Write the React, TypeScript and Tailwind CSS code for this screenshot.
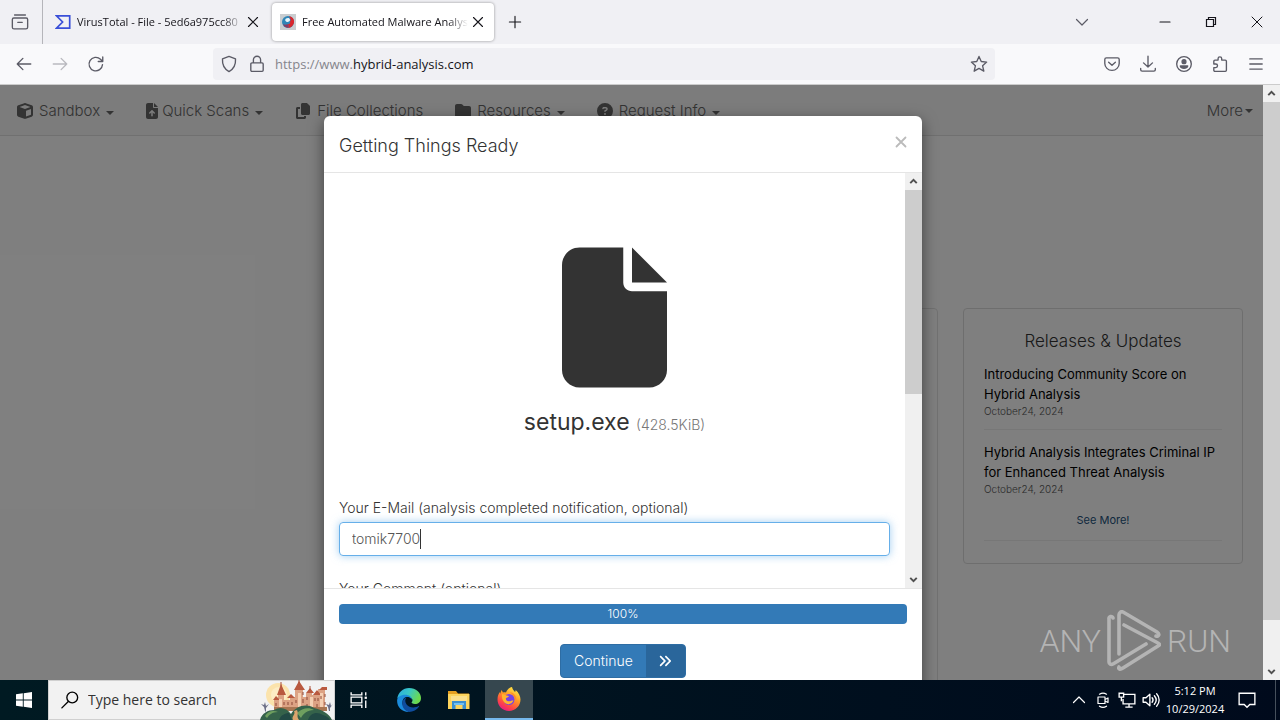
import type { ReactNode } from "react";
import {
  FaAnglesRight,
  FaCircleQuestion,
  FaCopy,
  FaCube,
  FaFile,
  FaFileArrowUp,
  FaFolder,
} from "react-icons/fa6";

function Glyph({ children, className = "size-4" }: { children: ReactNode; className?: string }) {
  return (
    <svg
      viewBox="0 0 16 16"
      className={className}
      fill="none"
      stroke="currentColor"
      strokeWidth="1.2"
      strokeLinecap="round"
      strokeLinejoin="round"
      aria-hidden="true"
    >
      {children}
    </svg>
  );
}

function VirusTotalIcon() {
  return (
    <svg viewBox="0 0 16 16" className="size-4 shrink-0" fill="none" stroke="#3a4fd8" strokeWidth="1.7">
      <path d="M1.5 1.8h13.2v12.4H1.5L7.6 8z" />
    </svg>
  );
}

function HybridIcon() {
  return (
    <svg viewBox="0 0 16 16" className="size-4 shrink-0">
      <path fill="#c9cdd0" d="M0 0h16v16H0z" />
      <circle cx="8" cy="8" r="6" fill="#2f86b8" />
      <path fill="#d9262c" d="M9 2.200c4 .6 5.500 3.500 5 6.300-.5 3-3 5.300-6 5.300 1-1.500.5-2.500-.5-3.500 2 .2 3.200-1 2.500-2.800 1-.8 1-3-1-5.300z" />
      <path fill="#e8f4fa" d="M6 4.500c2-1.200 3.800-.5 4 1.200.1 1.600-2 2.800-3.600 2C5 7 4.800 5.300 6 4.500z" />
      <path fill="#8b3a62" d="M3 10c1.500 1 3 .8 4.500.3.900 1 1.500 2 .5 3.500-2.400 0-4.200-1.600-5-3.800z" />
    </svg>
  );
}

function Tab({ icon, title, active }: { icon: ReactNode; title: string; active?: boolean }) {
  return (
    <div
      className={
        active
          ? "flex h-[38px] w-[222px] items-center rounded bg-white px-2 shadow-[0_0_3px_rgba(0,0,0,0.4)]"
          : "flex h-[38px] w-[222px] items-center px-2"
      }
    >
      {icon}
      <span className="ml-1.5 w-[166px] overflow-hidden pt-px text-[11px] whitespace-nowrap [mask-image:linear-gradient(to_right,black_88%,transparent)]">
        {title}
      </span>
      <button aria-label="Close tab" className="ml-1 shrink-0">
        <Glyph className="size-3">
          <path d="M2 2l12 12M14 2L2 14" strokeWidth="1.5" />
        </Glyph>
      </button>
    </div>
  );
}

function TabStrip() {
  return (
    <div className="flex h-11 shrink-0 items-center bg-[#f0f0f4] text-[#15141a]">
      <button aria-label="View recent browsing" className="flex h-full w-[43px] items-center justify-center border-r border-[#b5b5ba] pr-0.5 text-[#5b5b66]">
        <Glyph className="size-[18px]">
          <path d="M3.200 1.800h9.600M2.500 4.400h11c.8 0 1.300.5 1.300 1.300v6.900c0 .9-.6 1.500-1.500 1.500H2.700c-.9 0-1.500-.6-1.500-1.500V5.700c0-.8.500-1.300 1.300-1.300zM6 8.300h4" />
        </Glyph>
      </button>
      <div className="flex gap-[3px] pl-1">
        <Tab icon={<VirusTotalIcon />} title="VirusTotal - File - 5ed6a975cc80" />
        <Tab icon={<HybridIcon />} title="Free Automated Malware Analysis" active />
      </div>
      <button aria-label="New tab" className="ml-3">
        <Glyph className="size-[18px]">
          <path d="M8 3v10M3 8h10" strokeWidth="1" />
        </Glyph>
      </button>
      <button aria-label="List all tabs" className="mr-[52px] ml-auto text-[#5b5b66]">
        <Glyph>
          <path d="M2.500 5.500L8 11l5.500-5.500" />
        </Glyph>
      </button>
      <div className="flex">
        <button aria-label="Minimize" className="flex w-[46px] justify-center">
          <Glyph>
            <path d="M3 8h10" />
          </Glyph>
        </button>
        <button aria-label="Restore" className="flex w-[46px] justify-center">
          <Glyph>
            <path d="M3.500 5.500h7v7h-7zM5.500 5.500v-2h7v7h-2" strokeLinejoin="miter" />
          </Glyph>
        </button>
        <button aria-label="Close" className="flex w-[46px] justify-center">
          <Glyph>
            <path d="M3 3l10 10M13 3L3 13" strokeWidth="1" />
          </Glyph>
        </button>
      </div>
    </div>
  );
}

function ToolButton({ label, children }: { label: string; children: ReactNode }) {
  return (
    <button aria-label={label} className="flex w-9 justify-center">
      <Glyph className="size-[18px]">{children}</Glyph>
    </button>
  );
}

function Toolbar() {
  return (
    <div className="flex h-[41px] shrink-0 items-center border-b border-[#cccccc] bg-[#f9f9fb] px-1.5 text-[#5b5b66]">
      <ToolButton label="Back">
        <path d="M14 8H2M7 3L2 8l5 5" />
      </ToolButton>
      <span className="flex opacity-40">
        <ToolButton label="Forward">
          <path d="M2 8h12M9 3l5 5-5 5" />
        </ToolButton>
      </span>
      <ToolButton label="Reload">
        <path d="M13.800 8.500A6 6 0 1 1 12 3.800l1.800 1.700M14 1.800v4h-4" />
      </ToolButton>
      <div className="ml-[99px] flex h-8 flex-1 items-center rounded bg-[#f0f0f4] px-[7px]">
        <Glyph className="size-[18px]">
          <path d="M8 1.300l5.800 2.200c.3 4.700-1.300 8.700-5.800 11.200C3.500 12.200 1.900 8.200 2.200 3.500z" />
        </Glyph>
        <Glyph className="ml-2.5 size-[18px]">
          <path d="M3.500 7h9c.6 0 1 .4 1 1v5.500c0 .6-.4 1-1 1h-9c-.6 0-1-.4-1-1V8c0-.6.4-1 1-1zM4.800 7V4.300a3.200 3.200 0 0 1 6.400 0V7" />
        </Glyph>
        <div role="textbox" aria-label="Address" className="ml-[9px] flex-1 pt-0.5 text-[13px] text-[#85858c]">
          https://www.<span className="text-[#15141a]">hybrid-analysis.com</span>
        </div>
        <button aria-label="Bookmark this page">
          <Glyph className="size-[18px]">
            <path d="M8 1.300l2 4.500 4.800.5-3.600 3.300 1.100 4.800L8 11.900l-4.300 2.500 1.100-4.800L1.200 6.300 6 5.800z" />
          </Glyph>
        </button>
      </div>
      <div className="ml-[99px] flex">
        <ToolButton label="Save to Pocket">
          <path d="M3 2.500h10c.8 0 1.400.6 1.400 1.400V7.500a6.400 6.200 0 0 1-12.800 0V3.900c0-.8.6-1.400 1.400-1.400zM5 6.500l3 2.700 3-2.700" />
        </ToolButton>
        <ToolButton label="Downloads">
          <path d="M8 1v9.500M4 7l4 3.700L12 7M1.500 12v1c0 .8.500 1.300 1.300 1.300h10.400c.8 0 1.300-.5 1.300-1.300v-1" />
        </ToolButton>
        <ToolButton label="Account">
          <circle cx="8" cy="8" r="6.500" />
          <circle cx="8" cy="5.900" r="1.700" fill="currentColor" />
          <path d="M4.700 9.800h6.600c-.4 1.300-1.700 2-3.300 2s-2.900-.7-3.300-2z" fill="currentColor" />
        </ToolButton>
        <ToolButton label="Extensions">
          <path d="M6.300 4.500V3.200a1.600 1.600 0 0 1 3.200 0v1.300h3.200c.6 0 1 .4 1 1v8c0 .6-.4 1-1 1H3.500c-.6 0-1-.4-1-1v-2.300h1.700a1.600 1.600 0 0 0 0-3.200H2.500V5.500c0-.6.4-1 1-1z" />
        </ToolButton>
        <ToolButton label="Menu">
          <path d="M2.500 3.500h11M2.500 8h11M2.500 12.500h11" />
        </ToolButton>
      </div>
    </div>
  );
}

function ScrollBar({ thumb }: { thumb: string }) {
  return (
    <div className="flex w-[17px] shrink-0 flex-col bg-[#f0f0f0] text-[#505050]">
      <Glyph className="mx-auto my-[2px] size-[13px] shrink-0">
        <path d="M4 10l4-4 4 4" strokeWidth="2.400" strokeLinecap="butt" strokeLinejoin="miter" />
      </Glyph>
      <div className={thumb} />
      <Glyph className="mx-auto mt-auto mb-[2px] size-[13px] shrink-0">
        <path d="M4 6l4 4 4-4" strokeWidth="2.400" strokeLinecap="butt" strokeLinejoin="miter" />
      </Glyph>
    </div>
  );
}

function Caret({ className }: { className?: string }) {
  return (
    <svg viewBox="0 0 8 4" className={className} fill="currentColor" aria-hidden="true">
      <path d="M0 0h8L4 4z" />
    </svg>
  );
}

const menu = [
  { label: "Sandbox", icon: <FaCube />, caret: true },
  { label: "Quick Scans", icon: <FaFileArrowUp />, caret: true, narrow: true },
  { label: "File Collections", icon: <FaCopy />, caret: false },
  { label: "Resources", icon: <FaFolder />, caret: true },
  { label: "Request Info", icon: <FaCircleQuestion />, caret: true },
];

function SiteNav() {
  return (
    <nav className="flex h-[51px] items-center border-b border-[#e0e0e0] bg-[#f8f8f8] pt-0.5 pl-px text-[15px] font-light text-[#666666]">
      {menu.map((m) => (
        <a key={m.label} href="#" className="flex items-center px-4 whitespace-nowrap">
          <span className={m.narrow ? "mr-1 text-base [&>svg]:w-3" : "mr-1.5 text-base"}>{m.icon}</span>
          {m.label}
          {m.caret && <Caret className="mt-1 ml-1.5 h-1 w-2" />}
        </a>
      ))}
      <a href="#" className="mr-2.5 ml-auto flex items-center">
        More
        <Caret className="ml-0.5 h-1 w-2" />
      </a>
    </nav>
  );
}

const news = [
  "Introducing Community Score on Hybrid Analysis",
  "Hybrid Analysis Integrates Criminal IP for Enhanced Threat Analysis",
];

function SitePage() {
  return (
    <div className="min-w-0 flex-1 bg-white">
      <SiteNav />
      <main className="flex h-full items-start gap-[25px] pt-[172px] pr-5">
        <section className="ml-auto h-full w-[578px] rounded border border-[#e3e3e3]" />
        <section className="w-[280px] rounded border border-[#dddddd] px-5 pt-5 pb-[22px]">
          <h2 className="text-center text-[17px] leading-6 font-light text-[#333333]">Releases &amp; Updates</h2>
          {news.map((title, i) => (
            <article key={title} className={i === 0 ? "mt-[11px] border-b border-[#eeeeee] pb-[11px]" : "mt-3"}>
              <a href="#" className="block text-[13px] leading-5 text-black">
                {title}
              </a>
              <time className="block text-[10px] leading-[14px] font-light text-[#555555]">October24, 2024</time>
            </article>
          ))}
          <div className="mt-4 border-b border-[#eeeeee] pb-3 text-center text-[11px] leading-4">
            <a href="#" className="text-[#23527c]">
              See More!
            </a>
          </div>
        </section>
      </main>
    </div>
  );
}

function UploadDialog() {
  return (
    <div
      role="dialog"
      aria-label="Getting Things Ready"
      className="mx-auto mt-[31px] w-[598px] overflow-hidden rounded-md bg-white text-[#333333] shadow-[0_5px_15px_rgba(0,0,0,0.5)]"
    >
      <header className="flex h-[57px] items-center justify-between border-b border-[#e5e5e5] px-[15px]">
        <h1 className="pt-[3px] text-lg font-light">Getting Things Ready</h1>
        <button aria-label="Close dialog" className="pb-1 text-[#bbbbbb]">
          <Glyph className="size-3">
            <path d="M2 2l12 12M14 2L2 14" strokeWidth="2.400" />
          </Glyph>
        </button>
      </header>
      <div className="flex h-[415px] overflow-hidden">
        <div className="flex-1 px-[15px]">
          <FaFile className="mx-auto mt-[74px] h-[141px] w-[105px]" />
          <p className="mt-[18px] text-center text-[23px] leading-8">
            setup.exe <small className="text-sm font-light text-[#777777]">(428.5KiB)</small>
          </p>
          <label htmlFor="email" className="mt-[60px] block text-sm leading-5 font-light">
            Your E-Mail (analysis completed notification, optional)
          </label>
          <div className="mt-1 flex h-[34px] items-center rounded border border-[#66afe9] px-3 shadow-[0_0_8px_rgba(102,175,233,0.6)]">
            <input
              id="email"
              defaultValue="tomik7700"
              className="field-sizing-content text-sm font-light text-[#555555] outline-none"
            />
            <span className="h-5 w-px bg-[#333333]" />
          </div>
          <p className="mt-[23px] text-sm leading-5 font-light">Your Comment (optional)</p>
        </div>
        <ScrollBar thumb="h-[204px] shrink-0 bg-[#cdcdcd]" />
      </div>
      <footer className="border-t border-[#e5e5e5] px-[15px] pt-[15px] pb-8 text-center">
        <div className="h-5 rounded bg-[#337ab7] text-xs leading-5 font-light text-white">100%</div>
        <button className="mt-5 inline-flex h-[34px] items-center overflow-hidden rounded border border-[#2e6da4] bg-[#337ab7] text-sm font-light text-white">
          <span className="px-[13px]">Continue</span>
          <span className="flex h-full w-[39px] items-center justify-center bg-[#2a669b]">
            <FaAnglesRight />
          </span>
        </button>
      </footer>
    </div>
  );
}

function Watermark() {
  return (
    <div className="absolute right-[49px] bottom-2 flex items-center gap-1.5 font-[Roboto,sans-serif] text-[32px] leading-none font-light text-[#b4b4b4]">
      <span>ANY</span>
      <svg viewBox="0 0 54 62" className="h-[62px] w-[54px]" fill="none" stroke="currentColor" strokeWidth="3.600" strokeLinecap="round" strokeLinejoin="round">
        <path d="M6 8a2 2 0 0 0-4 1v43c0 2 2 3 4 2l33-20" />
        <path d="M12 44V5c0-2 2-4 4-3l34 20c3 2 2 5-1 4" />
        <path d="M17 15l34 18c2 1 2 2 0 3L16 58c-3 2-5 1-4-1" />
      </svg>
      <span>RUN</span>
    </div>
  );
}

function CastleArt() {
  return (
    <svg viewBox="0 0 74 40" className="h-10 w-[74px]">
      <circle cx="18" cy="15" r="12" fill="#fbe3ac" />
      <circle cx="19" cy="15" r="8" fill="#fdecc4" />
      <path fill="#6d7088" d="M5 31l-1-4-3-3 3 1 1-3 1 4 3-2-3 4v4zM69 31l-1-4-2-3 3 1 1-3 1 4 2-2-3 4v3z" />
      <path fill="#dca284" d="M14 31V19h4v-5h6v6h6v-3h5V9h8v8h3v-4h6v2h6V9h7v22z" />
      <path fill="#b9593f" d="M17 15l4-11 5 11zM34 10l5-9 6 9zM46 13l4-5 4 5zM53 15l4-5 4 5zM59 10l3-3h5v3zM13 20l3-4 4 4zM27 18l4-4 4 4z" />
      <path stroke="#a9513b" strokeWidth="1" d="M21 2v4M39 0v3M50 6v4" />
      <path fill="#f4cfb2" d="M19 19h3v11h-3zM38 13h3v17h-3zM50 17h3v12h-3zM60 13h3v15h-3z" />
      <path stroke="#8c4938" strokeWidth="1" d="M24 22v3M28 22v3M32 22v3M36 20v3M43 12v3M43 19v4M47 17v3M55 18v3M58 18v3M61 16v3M65 22v3M65 14v3M16 23v3M47 24v3M57 24v3" />
      <path fill="#a87552" d="M14 27h53v4H14z" />
      <path fill="#35624a" d="M0 40c2-7 8-10 14-10 6-4 13-2 17 4 5-8 15-11 23-6 8 2 15 5 18 12z" />
      <path fill="#6f9f5f" d="M5 36c3-5 8-6 13-4-6 0-9 3-11 6zM37 33c5-5 12-6 17-3-7 0-11 4-13 8z" />
      <path fill="#224a45" d="M48 40c2-7 9-9 15-5 4 1 6 3 7 5zM19 40c2-5 6-7 10-7l3 7z" />
      <path fill="#dba46d" d="M33 40c-2-4 3-5 1-9l3-1c2 4-1 6 2 10z" />
    </svg>
  );
}

function EdgeIcon() {
  return (
    <svg viewBox="0 0 24 24" className="size-6">
      <defs>
        <linearGradient id="edge-top" x1="0" y1="0" x2="1" y2="0.4">
          <stop offset="0" stopColor="#2ba9e0" />
          <stop offset="0.5" stopColor="#38c7c8" />
          <stop offset="1" stopColor="#6bd94f" />
        </linearGradient>
      </defs>
      <path fill="url(#edge-top)" d="M.3 10.500C1.200 4.500 6 0 12 0c7 0 12 4.700 12 10 0 4-3 6-6 6-2.500 0-4-1-3.300-1.700 1.700-2 .8-5.300-3.700-5.600C6 8 1.500 9 .3 10.500z" />
      <path fill="#1b8bdc" d="M.1 12.500C.2 9 4 6.800 8 6.800c4.600 0 7 2.500 6.700 5-.7-2-2.700-3-4.900-3C6.500 9.500 5 12.500 5.500 16c.6 3.500 3.300 6.500 6.500 7.900C5 24.100 0 19 .1 12.500z" />
      <path fill="#0f4d9e" d="M9.600 9.500C7.800 11 7.800 14 9.600 16.500c2.500 3.400 8 4 12 1.600.4-.2.700.1.500.5C20 22 16 24 12 24 7 22.500 5 18.500 5.300 15c.2-2.800 1.800-5 4.300-5.500z" />
    </svg>
  );
}

function ExplorerIcon() {
  return (
    <svg viewBox="0 0 24 24" className="size-6">
      <path fill="#e5a021" d="M1 3h8l2 2.500h11V9H1z" />
      <path fill="#fcd45c" d="M1 6h21.500v15H1z" />
      <path fill="#fbe08c" d="M4 8h16v5H4z" />
      <path fill="#3a8fd0" d="M5 13h14v8h-3.500v-4h-7v4H5z" />
      <path fill="#70bff2" d="M7 15h10v2H7z" />
    </svg>
  );
}

function FirefoxIcon() {
  return (
    <svg viewBox="0 0 24 24" className="size-6">
      <defs>
        <linearGradient id="fox" x1="0.800" y1="0" x2="0.250" y2="1">
          <stop offset="0" stopColor="#fff04a" />
          <stop offset="0.4" stopColor="#ff9d25" />
          <stop offset="0.75" stopColor="#ff4545" />
          <stop offset="1" stopColor="#e6168a" />
        </linearGradient>
      </defs>
      <path fill="url(#fox)" d="M15 0c.5 2 1.500 3.500 3 5 .6-.6.700-1.300.6-2 3 2.500 4.900 6 4.900 9.600C23.500 19 18.400 24 12 24S.5 19 .5 12.500C.5 9 1.700 6.500 3 5v2l1.500-4L6 5.500c1-.3 2-.2 3 .1 1-3 3.500-5 6-5.600z" />
      <circle cx="12" cy="12.500" r="5.500" fill="#7542e5" />
      <path fill="#ffb52d" d="M5 7c2 .3 3 .5 4.500 1.600L12 9c-.5 1.300-2 1.700-3 2-.4 1.500.5 3 2.500 3.300 2 .3 3-1 5-.7-1.300 3-4.300 4.200-7 3.200C6 15.500 4.500 11 5 7z" />
      <path fill="#ff8b28" d="M13 5c4 1 6.500 4 6.300 8-1 0-1.300-2-2-3-.8-2-3-3-4.300-5z" />
    </svg>
  );
}

function TaskButton({ label, active, children }: { label: string; active?: boolean; children: ReactNode }) {
  return (
    <button
      aria-label={label}
      className={
        active
          ? "flex w-12 items-center justify-center border-b-2 border-[#76b9ed] bg-[#36474f]"
          : "flex w-12 items-center justify-center"
      }
    >
      {children}
    </button>
  );
}

function Taskbar() {
  return (
    <div className="flex h-10 shrink-0 bg-linear-to-r from-[#001a22] to-[#000a1c] text-white">
      <TaskButton label="Start">
        <svg viewBox="0 0 16 16" className="size-4" fill="currentColor">
          <path d="M0 2.200L6.800 1.300v6.300H0zM7.700 1.200L16 0v7.600H7.700zM0 8.400h6.800v6.300L0 13.800zM7.700 8.400H16V16l-8.300-1.200z" />
        </svg>
      </TaskButton>
      <div className="flex w-[287px] items-center border border-[#d0d0d0] bg-[#f2f2f2] pl-3 text-black">
        <Glyph className="size-[18px] shrink-0">
          <circle cx="10" cy="5.800" r="4.800" />
          <path d="M6.500 9.300L.8 15" />
        </Glyph>
        <input
          aria-label="Search"
          placeholder="Type here to search"
          className="ml-[9px] min-w-0 flex-1 text-sm outline-none placeholder:text-[#333333]"
        />
        <CastleArt />
      </div>
      <div className="flex gap-0.5">
        <TaskButton label="Task view">
          <Glyph className="size-[18px]">
            <path d="M1 1v2.500h9.500V1M1 15v-2.500h9.500V15M1 5.500h9.500v5H1zM14 1v3M14 8.500V15" strokeLinecap="butt" strokeLinejoin="miter" />
            <path d="M13 5h2v2h-2z" fill="currentColor" stroke="none" />
          </Glyph>
        </TaskButton>
        <TaskButton label="Edge">
          <EdgeIcon />
        </TaskButton>
        <TaskButton label="File Explorer">
          <ExplorerIcon />
        </TaskButton>
        <TaskButton label="Firefox" active>
          <FirefoxIcon />
        </TaskButton>
      </div>
      <div className="ml-auto flex items-center">
        <button aria-label="Show hidden icons" className="flex w-6 justify-center">
          <Glyph>
            <path d="M2.500 10.500L8 5l5.500 5.500" />
          </Glyph>
        </button>
        <button aria-label="Meet now" className="flex w-6 justify-center">
          <Glyph>
            <path d="M3 5h7v6.500H3zM10 7.500l3-1.500v4.500l-3-1.500M4.500 2.200c2-1.300 5-1.300 7 0M4.500 14.200c2 1.300 5 1.300 7 0" />
          </Glyph>
        </button>
        <button aria-label="Network" className="flex w-6 justify-center">
          <Glyph className="size-[18px]">
            <path d="M5.500 3H15v8.500H4.500V7M9.800 11.500V14M6.500 14.300h6.500M1 2h4v3.500H1zM3 5.500V9" strokeLinecap="butt" strokeLinejoin="miter" />
          </Glyph>
        </button>
        <button aria-label="Volume" className="flex w-6 justify-center">
          <Glyph className="size-[18px]">
            <path d="M1 6h2.500L7 2.800v10.400L3.500 10H1zM9 6c1 1.200 1 2.800 0 4M11 4.200c2 2.300 2 5.300 0 7.600M13 2.500c3 3.300 3 7.700 0 11" />
          </Glyph>
        </button>
        <time className="w-16 text-center text-[11px] leading-[18px]">
          5:12 PM
          <br />
          10/29/2024
        </time>
        <button aria-label="Notifications" className="flex w-10 justify-center">
          <Glyph className="size-[18px]">
            <path d="M1 2h14v10h-4.500L8 14.500 5.500 12H1z" strokeLinejoin="miter" />
          </Glyph>
        </button>
        <span className="ml-2 h-10 w-[5px] border-l border-[#46505c]" />
      </div>
    </div>
  );
}

export default function App() {
  return (
    <div className="flex h-screen flex-col overflow-hidden font-['Open_Sans',sans-serif]">
      <TabStrip />
      <Toolbar />
      <div className="relative flex min-h-0 flex-1 overflow-hidden font-[Inter,sans-serif]">
        <SitePage />
        <div className="absolute inset-0 right-[17px] overflow-hidden bg-black/50 pr-[17px]">
          <UploadDialog />
        </div>
        <ScrollBar thumb="h-[518px] shrink-0 bg-[#cdcdcd]" />
        <Watermark />
      </div>
      <Taskbar />
    </div>
  );
}
